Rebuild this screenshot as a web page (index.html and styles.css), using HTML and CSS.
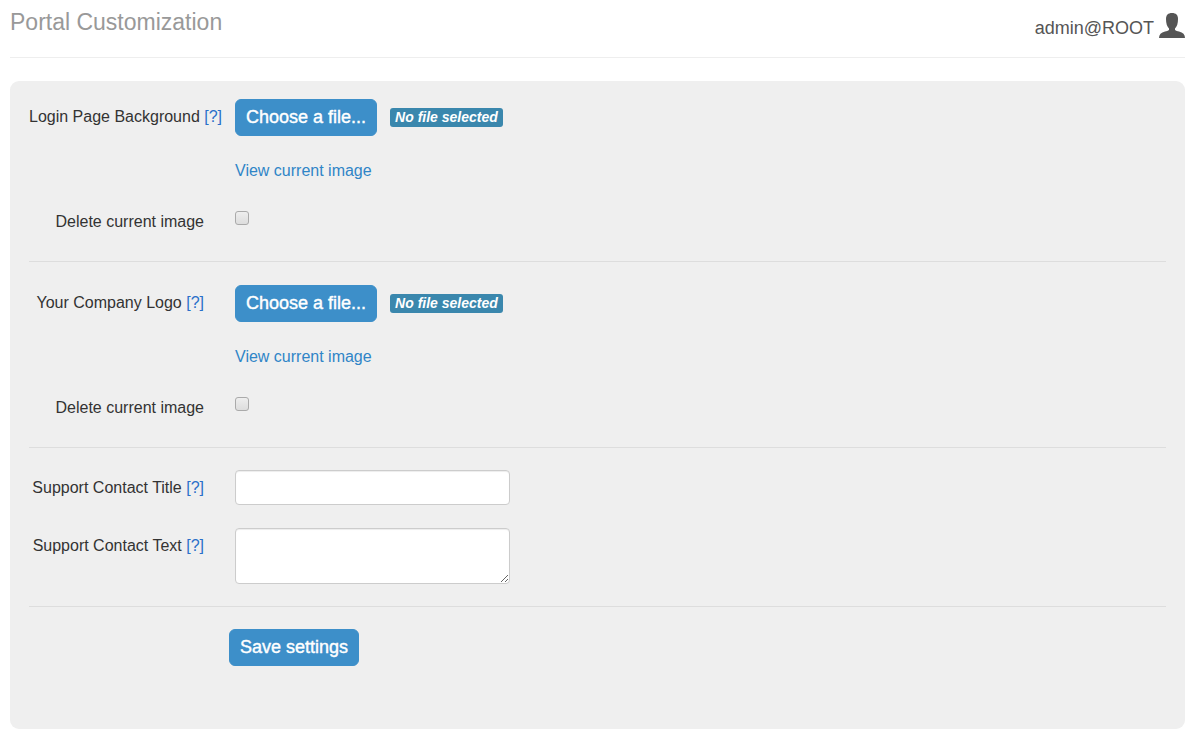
FILE: index.html
```html
<!DOCTYPE html>
<html lang="en">
<head>
    <meta charset="UTF-8">
    <meta name="viewport" content="width=device-width, initial-scale=1.0">
    <title>Portal Customization</title>
    <link rel="stylesheet" href="styles.css">
</head>
<body>

    <!-- header -->
    <header class="page-header">
        <h1>Portal Customization</h1>
        <div class="user">
            <span>admin@ROOT</span>
            <svg class="user-icon" viewBox="0 0 26 26" aria-hidden="true">
                <path d="M13 0C17 0 19 2 19 6C19 10.500 18 13.500 16 15.500V17C17 18 18.500 18 20 18.400C24 19.300 26 21.500 26 25H0C0 21.500 2 19.300 6 18.400C7.500 18 9 18 10 17V15.500C8 13.500 7 10.500 7 6C7 2 9 0 13 0Z"/>
            </svg>
        </div>
    </header>

    <!-- settings form -->
    <form class="well">
        <section class="group">
            <div class="row">
                <label class="row-label" for="login_bg">Login Page Background <a href="#">[?]</a></label>
                <div class="file">
                    <button type="button" class="btn" id="login_bg">Choose a file...</button>
                    <em class="badge">No file selected</em>
                </div>
            </div>
            <div class="row">
                <a class="view-link" href="#">View current image</a>
            </div>
            <div class="row">
                <label class="row-label" for="login_bg_delete">Delete current image</label>
                <input type="checkbox" class="check" id="login_bg_delete">
            </div>
        </section>

        <section class="group">
            <div class="row">
                <label class="row-label" for="logo">Your Company Logo <a href="#">[?]</a></label>
                <div class="file">
                    <button type="button" class="btn" id="logo">Choose a file...</button>
                    <em class="badge">No file selected</em>
                </div>
            </div>
            <div class="row">
                <a class="view-link" href="#">View current image</a>
            </div>
            <div class="row">
                <label class="row-label" for="logo_delete">Delete current image</label>
                <input type="checkbox" class="check" id="logo_delete">
            </div>
        </section>

        <section class="group contact">
            <div class="row">
                <label class="row-label" for="contact_title">Support Contact Title <a href="#">[?]</a></label>
                <input type="text" class="field" id="contact_title">
            </div>
            <div class="row">
                <label class="row-label" for="contact_text">Support Contact Text <a href="#">[?]</a></label>
                <textarea class="field" id="contact_text"></textarea>
            </div>
        </section>

        <div class="actions">
            <button type="submit" class="btn">Save settings</button>
        </div>
    </form>

</body>
</html>
```
FILE: styles.css
```css
* {
    box-sizing: border-box;
}

body {
    margin: 0;
    padding: 0 7px 3px 10px;
    background: #fff;
    color: #333;
    font-family: "Liberation Sans", Arial, sans-serif;
    font-size: 16px;
    line-height: 21px;
}

a {
    color: #2a6fc9;
    text-decoration: none;
}

/* header */
.page-header {
    display: flex;
    justify-content: space-between;
    height: 58px;
    margin-bottom: 23px;
    border-bottom: 1px solid #eee;
}

.page-header h1 {
    margin: 8px 0 0;
    color: #999;
    font-size: 23px;
    font-weight: normal;
    line-height: 28px;
}

.user {
    display: flex;
    gap: 5px;
    padding-top: 13px;
    color: #555;
    font-size: 18px;
    line-height: 30px;
}

.user-icon {
    width: 26px;
    height: 26px;
    fill: #555;
}

/* form */
.well {
    padding: 18px 19px 63px;
    background: #efefef;
    border-radius: 9px;
}

.group {
    display: flex;
    flex-direction: column;
    gap: 23px;
    padding-bottom: 22px;
    margin-bottom: 23px;
    border-bottom: 1px solid #ddd;
}

.group:nth-of-type(2),
.contact {
    margin-bottom: 22px;
}

.row {
    display: grid;
    grid-template-columns: 175px 1fr;
    column-gap: 31px;
    align-items: start;
}

.row-label {
    padding: 7px 0;
    text-align: right;
    white-space: nowrap;
}

.file {
    display: flex;
    align-items: center;
    gap: 13px;
}

.btn {
    height: 37px;
    padding: 0 10px;
    border: 1px solid #3d8fc9;
    border-radius: 6px;
    background: #3d8fc9;
    color: #fff;
    font-family: inherit;
    font-size: 18px;
    -webkit-text-stroke: 0.4px #fff;
}

.badge {
    padding: 0 5px;
    border-radius: 3px;
    background: #3a87ad;
    color: #fff;
    font-size: 14px;
    font-weight: bold;
    line-height: 19px;
}

.view-link {
    grid-column: 2;
    justify-self: start;
    padding-top: 1px;
    color: #2f85c7;
}

.check {
    appearance: none;
    width: 14px;
    height: 14px;
    margin: 7px 0 0;
    border: 1px solid #aaa;
    border-radius: 3px;
    background: linear-gradient(#eee, #ddd);
}

.check:checked {
    background: #3d8fc9;
}

.field {
    width: 275px;
    height: 35px;
    padding: 4px 6px;
    border: 1px solid #ccc;
    border-radius: 4px;
    background: #fff;
    box-shadow: inset 0 1px 1px rgba(0, 0, 0, 0.075);
    font: inherit;
}

textarea.field {
    display: block;
    height: 56px;
}

.actions {
    padding-left: 200px;
}
```
